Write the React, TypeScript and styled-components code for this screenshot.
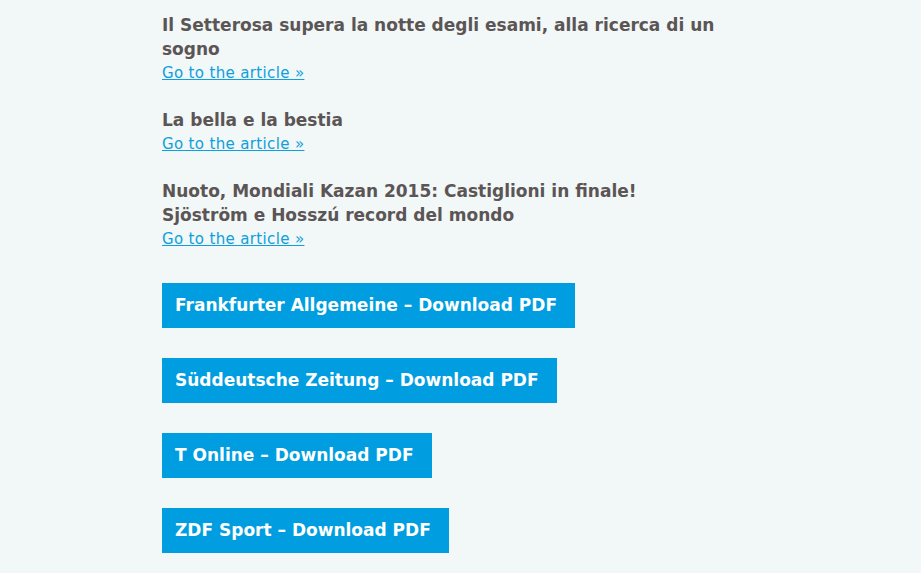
import styled, { createGlobalStyle } from 'styled-components';

const GlobalStyle = createGlobalStyle`
  html, body {
    margin: 0;
    padding: 0;
    background: #f2f7f7;
  }
  body {
    font-family: 'DejaVu Sans', sans-serif;
  }
`;

const Page = styled.div`
  width: 560px;
  margin-left: 162px;
  padding-top: 13px;
`;

const Article = styled.div`
  margin-bottom: 23px;
`;

const Title = styled.h3`
  margin: 0;
  font-size: 17px;
  line-height: 24px;
  font-weight: bold;
  color: #5b5555;
`;

const ArticleLink = styled.a`
  display: inline-block;
  font-size: 15px;
  line-height: 24px;
  letter-spacing: 0.35px;
  color: #0ca0dc;
  text-decoration: underline;
`;

const Downloads = styled.div`
  display: flex;
  flex-direction: column;
  align-items: flex-start;
  gap: 30px;
  padding-top: 9px;
`;

const DownloadButton = styled.a`
  display: block;
  background: #009ee0;
  color: #ffffff;
  font-size: 17px;
  font-weight: bold;
  line-height: 45px;
  padding: 0 18px 0 13px;
  text-decoration: none;
`;

const articles = [
  'Il Setterosa supera la notte degli esami, alla ricerca di un sogno',
  'La bella e la bestia',
  'Nuoto, Mondiali Kazan 2015: Castiglioni in finale! Sjöström e Hosszú record del mondo',
];

const papers = ['Frankfurter Allgemeine', 'Süddeutsche Zeitung', 'T Online', 'ZDF Sport'];

const App = () => (
  <>
    <GlobalStyle />
    <Page>
      {articles.map((t) => (
        <Article key={t}>
          <Title>{t}</Title>
          <ArticleLink href="#">Go to the article »</ArticleLink>
        </Article>
      ))}
      <Downloads>
        {papers.map((p) => (
          <DownloadButton key={p} href="#">
            {p} – Download PDF
          </DownloadButton>
        ))}
      </Downloads>
    </Page>
  </>
);

export default App;
